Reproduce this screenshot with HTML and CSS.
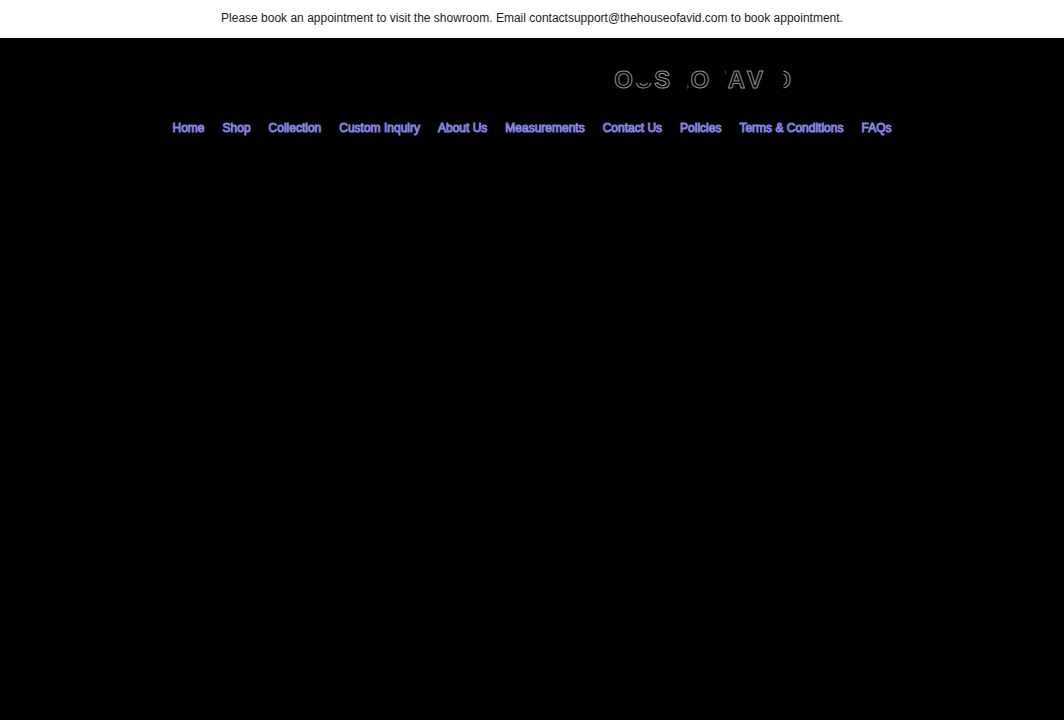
FILE: index.html
```
<!DOCTYPE html>
<html lang="en">
<head>
    <meta charset="UTF-8">
    <meta name="viewport" content="width=device-width, initial-scale=1.0">
    <title>House of Avid</title>
    <link rel="stylesheet" href="styles.css">
</head>
<body>
    <p class="announcement">Please book an appointment to visit the showroom. Email contactsupport@thehouseofavid.com to book appointment.</p>

    <header>
        <!-- Outlined wordmark: only the round and slanted letters show in full -->
        <h1 class="brand">
            <span class="off">H</span><span>O</span><span class="lower">U</span><span>S</span><span class="foot">E</span><span>O</span><span class="tip">F</span><span>A</span><span>V</span><span class="off">I</span><span class="right">D</span>
        </h1>

        <nav>
            <a href="#home">Home</a>
            <a href="#shop">Shop</a>
            <a href="#collection">Collection</a>
            <a href="#custom">Custom Inquiry</a>
            <a href="#about">About Us</a>
            <a href="#measurements">Measurements</a>
            <a href="#contact">Contact Us</a>
            <a href="#policies">Policies</a>
            <a href="#terms">Terms &amp; Conditions</a>
            <a href="#faqs">FAQs</a>
        </nav>
    </header>
</body>
</html>
```
FILE: styles.css
```
body {
    margin: 0;
    min-height: 100vh;
    background: #000;
    font-family: "Liberation Sans", Arial, sans-serif;
    font-size: 12px;
}
.announcement {
    margin: 0;
    padding: 9px 10px 11px;
    background: #fff;
    color: #1c1c1c;
    line-height: 18px;
    text-align: center;
}
header {
    display: flex;
    flex-direction: column;
    align-items: center;
    gap: 26px;
    padding: 28px 20px;
}
.brand {
    display: flex;
    justify-content: flex-end;
    width: 51%;
    margin: 0;
    color: #000;
    font-size: 24px;
    line-height: 28px;
    letter-spacing: 2px;
    -webkit-text-stroke: 1px #909090;
}
/* Letters and strokes that fade into the background */
.brand .off {
    visibility: hidden;
}
.brand .lower {
    clip-path: inset(60% 0 0 0);
}
.brand .right {
    clip-path: inset(0 0 0 50%);
}
.brand .foot {
    clip-path: inset(60% 0 0 84%);
}
.brand .tip {
    clip-path: inset(0 0 60% 84%);
}
nav {
    display: flex;
    flex-wrap: wrap;
    justify-content: center;
    gap: 18px;
}
nav a {
    color: #0c0c38;
    line-height: 16px;
    text-decoration: none;
    -webkit-text-stroke: 1px #8484e0;
}
```
